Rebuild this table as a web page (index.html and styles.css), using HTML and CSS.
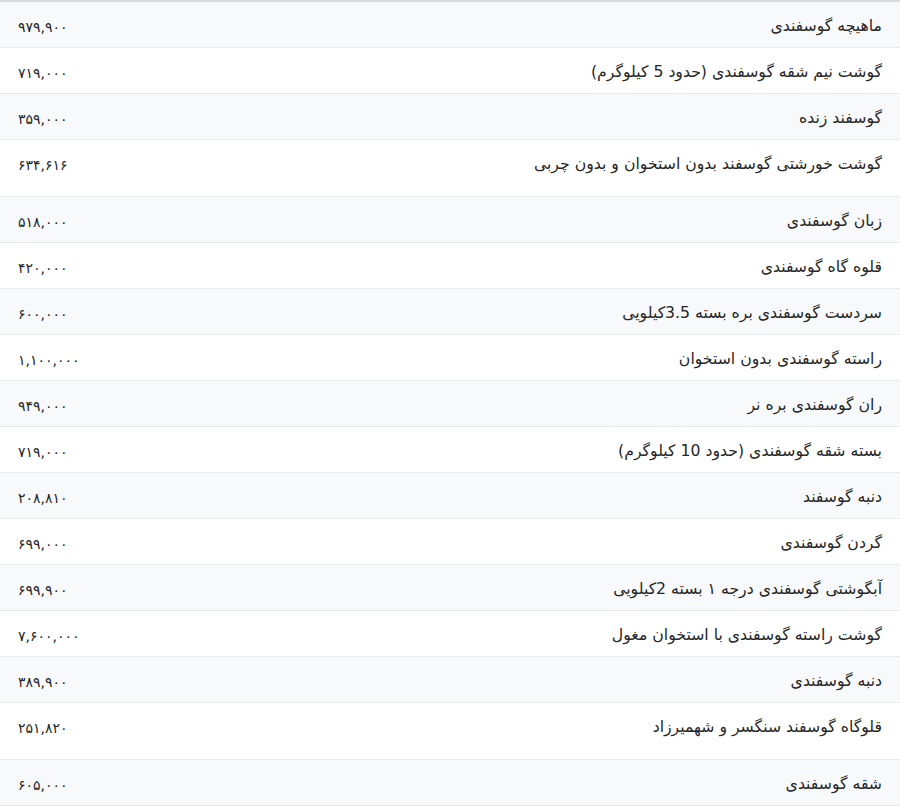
FILE: index.html
```html
<!DOCTYPE html>
<html lang="fa" dir="rtl">
<head>
<meta charset="utf-8">
<title>قیمت گوشت گوسفندی</title>
<link rel="stylesheet" href="styles.css">
</head>
<body>
<table class="price-table">
<tbody>
<tr><td class="name">ماهیچه گوسفندی</td><td class="price">۹۷۹,۹۰۰</td></tr>
<tr><td class="name">گوشت نیم شقه گوسفندی (حدود 5 کیلوگرم)</td><td class="price">۷۱۹,۰۰۰</td></tr>
<tr><td class="name">گوسفند زنده</td><td class="price">۳۵۹,۰۰۰</td></tr>
<tr class="tall"><td class="name">گوشت خورشتی گوسفند بدون استخوان و بدون چربی</td><td class="price">۶۳۴,۶۱۶</td></tr>
<tr><td class="name">زبان گوسفندی</td><td class="price">۵۱۸,۰۰۰</td></tr>
<tr><td class="name">قلوه گاه گوسفندی</td><td class="price">۴۲۰,۰۰۰</td></tr>
<tr><td class="name">سردست گوسفندی بره بسته 3.5کیلویی</td><td class="price">۶۰۰,۰۰۰</td></tr>
<tr><td class="name">راسته گوسفندی بدون استخوان</td><td class="price">۱,۱۰۰,۰۰۰</td></tr>
<tr><td class="name">ران گوسفندی بره نر</td><td class="price">۹۴۹,۰۰۰</td></tr>
<tr><td class="name">بسته شقه گوسفندی (حدود 10 کیلوگرم)</td><td class="price">۷۱۹,۰۰۰</td></tr>
<tr><td class="name">دنبه گوسفند</td><td class="price">۲۰۸,۸۱۰</td></tr>
<tr><td class="name">گردن گوسفندی</td><td class="price">۶۹۹,۰۰۰</td></tr>
<tr><td class="name">آبگوشتی گوسفندی درجه ۱ بسته 2کیلویی</td><td class="price">۶۹۹,۹۰۰</td></tr>
<tr><td class="name">گوشت راسته گوسفندی با استخوان مغول</td><td class="price">۷,۶۰۰,۰۰۰</td></tr>
<tr><td class="name">دنبه گوسفندی</td><td class="price">۳۸۹,۹۰۰</td></tr>
<tr class="tall"><td class="name">قلوگاه گوسفند سنگسر و شهمیرزاد</td><td class="price">۲۵۱,۸۲۰</td></tr>
<tr><td class="name">شقه گوسفندی</td><td class="price">۶۰۵,۰۰۰</td></tr>
</tbody>
</table>
</body>
</html>
```

FILE: styles.css
```css
html, body {
  margin: 0;
  padding: 0;
  background: #ffffff;
}
body {
  font-family: "DejaVu Sans", sans-serif;
  color: #262626;
}
.price-table {
  width: 100%;
  border-collapse: collapse;
  border-top: 2px solid #d9dadc;
  border-bottom: 1px solid #e6e7e9;
}
.price-table td {
  padding: 13px 18px 11px 18px;
  line-height: 21px;
  border-top: 1px solid #e9eaec;
  vertical-align: top;
  white-space: nowrap;
}
.price-table tr:first-child td {
  border-top: 0;
}
.price-table tr:nth-child(odd) td {
  background: #f8f9fa;
}
.price-table .name {
  text-align: right;
  font-size: 15.7px;
}
.price-table .price {
  text-align: left;
  font-size: 14px;
  padding-top: 15px;
  padding-bottom: 9px;
}
.price-table tr.tall td.name {
  padding-bottom: 22px;
}
.price-table tr.tall td.price {
  padding-bottom: 20px;
}
```
